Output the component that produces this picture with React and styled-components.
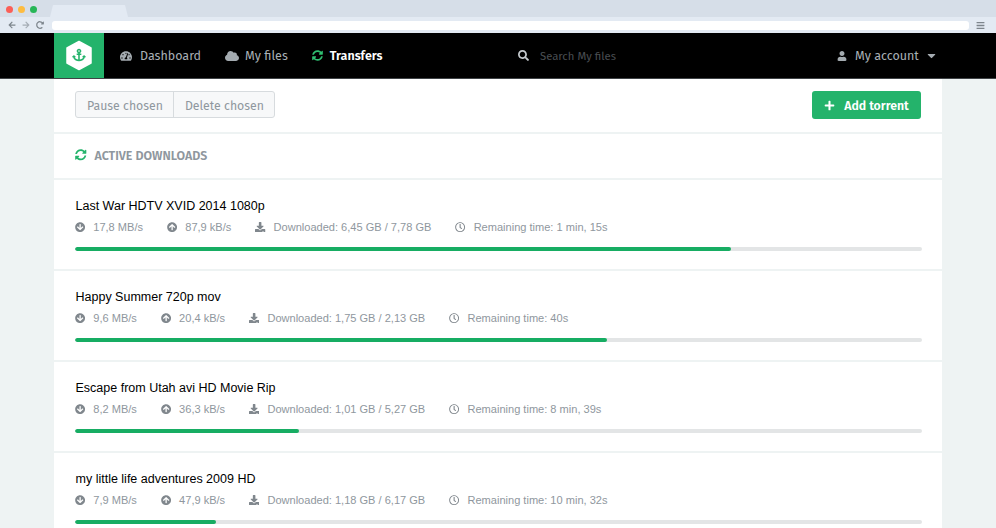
import React from "react";
import styled, { createGlobalStyle } from "styled-components";
import { FaTachometerAlt, FaCloud, FaSyncAlt, FaSearch, FaUser, FaCaretDown, FaPlus, FaAnchor, FaArrowCircleDown, FaArrowCircleUp, FaDownload, FaRegClock, FaArrowLeft, FaArrowRight, FaRedoAlt, FaBars } from "react-icons/fa";

const Global = createGlobalStyle`
  html, body { margin: 0; padding: 0; height: 528px; overflow: hidden; background: #eef3f3; }
  * { box-sizing: border-box; }
`;
const Page = styled.div`width: 996px; height: 528px; overflow: hidden; background: #eef3f3; font-family: "Liberation Sans", Arial, sans-serif;`;
const TabStrip = styled.div`height: 17px; background: #d6dee8; display: flex; align-items: flex-end; padding-left: 6px; position: relative;`;
const Dots = styled.div`display: flex; gap: 5px; height: 7px; align-self: flex-start; margin-top: 6px;`;
const Dot = styled.span`width: 7px; height: 7px; border-radius: 50%; background: ${p => p.$c};`;
const Tab = styled.div`width: 78px; height: 12px; margin-left: 13px; background: #e3eaf3; border-radius: 4px 4px 0 0; clip-path: polygon(3px 0, 75px 0, 78px 100%, 0 100%);`;
const UrlRow = styled.div`height: 16px; background: #e3eaf3; display: flex; align-items: center; padding: 0 11px 0 8px; color: #7d858c;`;
const NavIcons = styled.div`display: flex; align-items: center; gap: 6px; width: 44px; font-size: 8px;`;
const UrlBar = styled.div`width: 918px; height: 9px; background: #fff; border-radius: 3px; margin-right: 7px;`;
const Nav = styled.div`height: 46px; background: #000; border-bottom: 1px solid #3f4346; padding-left: 54px; display: flex; font-family: "Fira Sans", "Noto Sans", sans-serif; font-size: 12.5px; color: #a9b0b6;`;
const Logo = styled.div`width: 50px; height: 45px; background: #24b36b; display: flex; align-items: center; justify-content: center;`;
const Menu = styled.div`display: flex; align-items: center; gap: 24px; margin-left: 16px; width: 398px;`;
const MenuItem = styled.div`display: flex; align-items: center; gap: ${p => p.$gap || 8}px; color: ${p => p.$active ? "#fff" : "#a9b0b6"}; font-weight: ${p => p.$active ? 600 : 400}; svg { color: ${p => p.$active ? "#2fbf71" : "#a4abb0"}; font-size: ${p => p.$icon || 12}px; }`;
const Search = styled.div`display: flex; align-items: center; gap: 11px; width: 319px; color: #4a4e52; font-size: 11.3px; svg { color: #c4c9cd; font-size: 11px; }`;
const Account = styled.div`display: flex; align-items: center; gap: 8px; svg { color: #a4abb0; font-size: 10px; }`;
const Caret = styled(FaCaretDown)`margin-left: -2px; && { font-size: 13px; }`;
const Main = styled.div`width: 888px; margin-left: 54px; background: #fff;`;
const Toolbar = styled.div`height: 53px; padding: 12px 21px 0; display: flex; justify-content: space-between; align-items: flex-start; font-family: "Fira Sans", "Noto Sans", sans-serif; font-size: 12.3px;`;
const Group = styled.div`display: flex; height: 27px; border: 1px solid #d7dbde; border-radius: 3px; background: #f7f8f9;`;
const GroupBtn = styled.div`display: flex; align-items: center; padding: 2px 10px 0 11px; color: #8f979e; & + & { border-left: 1px solid #d7dbde; }`;
const AddBtn = styled.div`height: 28px; width: 109px; background: #24b36b; border-radius: 3px; color: #fff; font-weight: 600; display: flex; align-items: center; justify-content: center; gap: 9px; padding-top: 1px; svg { font-size: 11px; }`;
const Heading = styled.div`height: 48px; border-top: 2px solid #eef3f3; border-bottom: 2px solid #eef3f3; padding: 0 0 2px 21px; display: flex; align-items: center; gap: 8px; font-family: "Fira Sans", "Noto Sans", sans-serif; font-size: 12.4px; font-weight: 600; color: #8f979e; svg { color: #24b36b; font-size: 11.5px; }`;
const Row = styled.div`height: 91px; padding: 18px 20px 0 21px; border-bottom: 2px solid #eef3f3;`;
const Title = styled.div`font-size: 12.5px; line-height: 17px; color: #000; padding-left: 0.5px;`;
const Meta = styled.div`display: flex; align-items: center; height: 14px; margin-top: 5px; font-size: 11.05px; color: #8f979e; gap: 24px;`;
const MetaItem = styled.span`display: flex; align-items: center; gap: 8px; white-space: nowrap; svg { font-size: 10.25px; color: #80878d; }`;
const Track = styled.div`height: 4px; margin-top: 13px; background: #e3e5e6; border-radius: 2px; overflow: hidden;`;
const Fill = styled.div`height: 100%; background: #17ad63; border-radius: 2px;`;

const rows = [
  ["Last War HDTV XVID 2014 1080p", "17,8 MB/s", "87,9 kB/s", "Downloaded: 6,45 GB / 7,78 GB", "Remaining time: 1 min, 15s", 77.5],
  ["Happy Summer 720p mov", "9,6 MB/s", "20,4 kB/s", "Downloaded: 1,75 GB / 2,13 GB", "Remaining time: 40s", 62.8],
  ["Escape from Utah avi HD Movie Rip", "8,2 MB/s", "36,3 kB/s", "Downloaded: 1,01 GB / 5,27 GB", "Remaining time: 8 min, 39s", 26.5],
  ["my little life adventures 2009 HD", "7,9 MB/s", "47,9 kB/s", "Downloaded: 1,18 GB / 6,17 GB", "Remaining time: 10 min, 32s", 16.7],
];

export default function App() {
  return (
    <Page>
      <Global />
      <TabStrip>
        <Dots><Dot $c="#fb5f57" /><Dot $c="#fdbc40" /><Dot $c="#27b657" /></Dots>
        <Tab />
      </TabStrip>
      <UrlRow>
        <NavIcons><FaArrowLeft /><FaArrowRight style={{ opacity: 0.6 }} /><FaRedoAlt /></NavIcons>
        <UrlBar />
        <FaBars size={9} />
      </UrlRow>
      <Nav>
        <Logo>
          <svg width="28" height="31" viewBox="0 0 28 31">
            <path d="M14 1.5 L26 8 V23 L14 29.5 L2 23 V8 Z" fill="#fff" stroke="#fff" strokeWidth="1.5" strokeLinejoin="round" />
            <g transform="translate(7 8)" color="#24b36b"><FaAnchor size={14} /></g>
          </svg>
        </Logo>
        <Menu>
          <MenuItem><FaTachometerAlt />Dashboard</MenuItem>
          <MenuItem $icon={14} $gap={6}><FaCloud />My files</MenuItem>
          <MenuItem $active $icon={11} $gap={7}><FaSyncAlt />Transfers</MenuItem>
        </Menu>
        <Search><FaSearch />Search My files</Search>
        <Account><FaUser />My account<Caret /></Account>
      </Nav>
      <Main>
        <Toolbar>
          <Group><GroupBtn>Pause chosen</GroupBtn><GroupBtn>Delete chosen</GroupBtn></Group>
          <AddBtn><FaPlus />Add torrent</AddBtn>
        </Toolbar>
        <Heading><FaSyncAlt />ACTIVE DOWNLOADS</Heading>
        {rows.map(r => (
          <Row key={r[0]}>
            <Title>{r[0]}</Title>
            <Meta>
              <MetaItem><FaArrowCircleDown />{r[1]}</MetaItem>
              <MetaItem><FaArrowCircleUp />{r[2]}</MetaItem>
              <MetaItem><FaDownload />{r[3]}</MetaItem>
              <MetaItem><FaRegClock />{r[4]}</MetaItem>
            </Meta>
            <Track><Fill style={{ width: `${r[5]}%` }} /></Track>
          </Row>
        ))}
      </Main>
    </Page>
  );
}
